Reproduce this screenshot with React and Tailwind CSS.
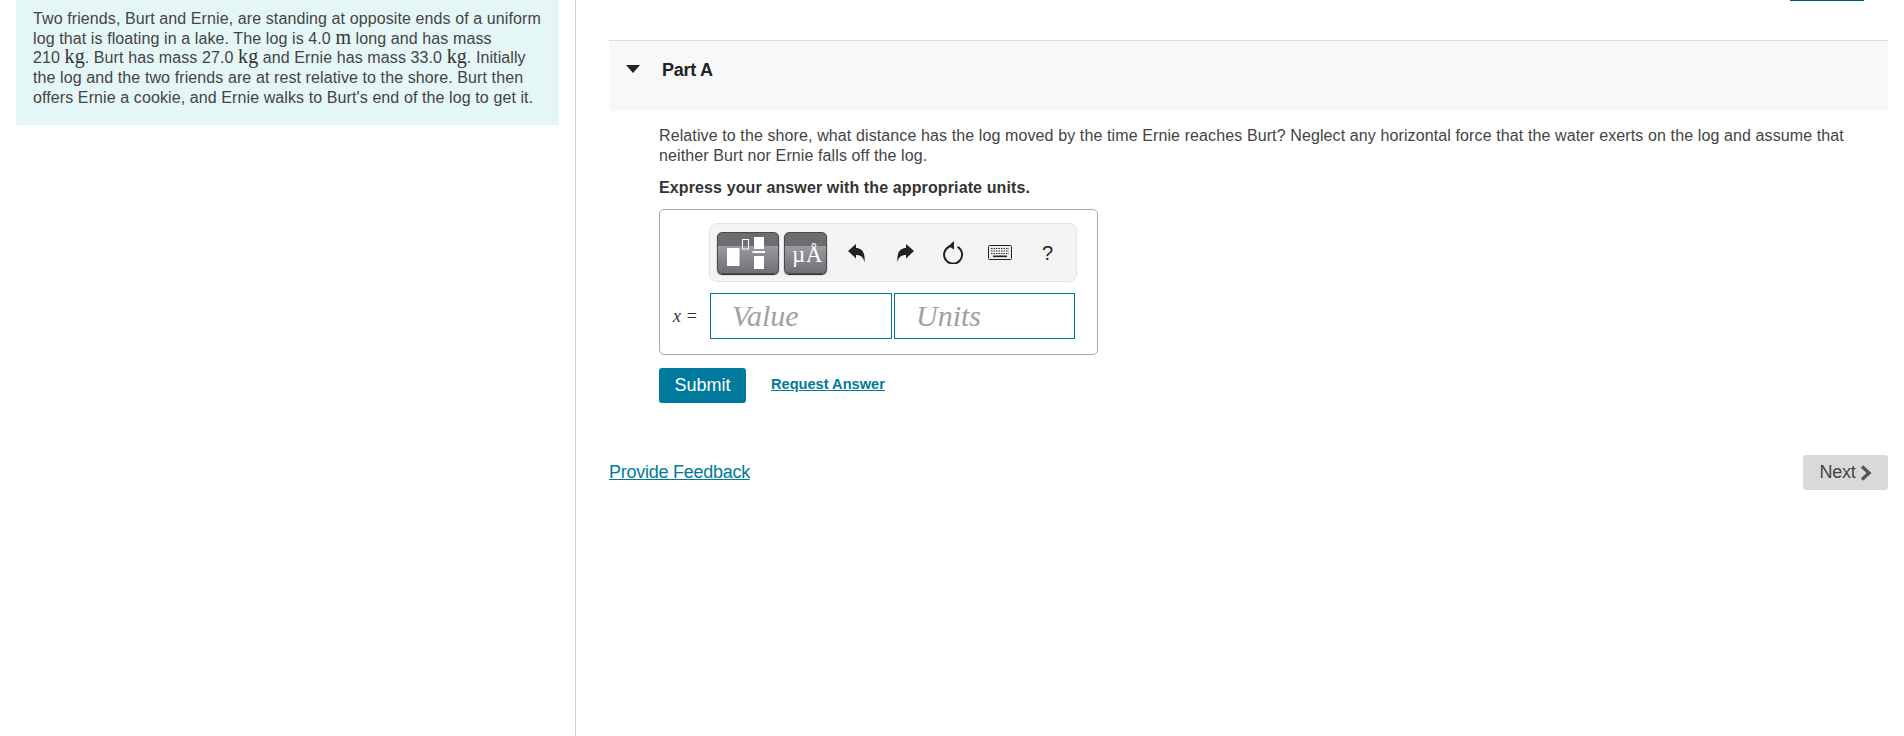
const sans = "font-['Liberation_Sans',Arial,sans-serif]";
const serif = "font-['Liberation_Serif','Times_New_Roman',serif]";

function Kg() {
  return <span className={`${serif} text-[20px] leading-[0] text-[#333]`}>kg</span>;
}

function TemplatesIcon() {
  return (
    <div className="relative h-[42px] w-[62px] overflow-hidden rounded-[5px] border border-[#4a4a4e] bg-[linear-gradient(#6d6d71_0,#6d6d71_33%,#9a9aa2_33%,#6f6f75_100%)] shadow-[0_1px_1px_#222]">
      <svg width="62" height="42" viewBox="0 0 62 42" className="absolute -left-px -top-px">
        <rect x="10" y="16" width="12.5" height="18" fill="#fff" />
        <rect x="25.5" y="7.5" width="6" height="9.5" fill="none" stroke="#fff" strokeWidth="1" />
        <rect x="37" y="5" width="10" height="12" fill="#fff" />
        <rect x="35.5" y="19" width="12.5" height="2" fill="#fff" />
        <rect x="37" y="24" width="10" height="13" fill="#fff" />
      </svg>
    </div>
  );
}

function UnitsIcon() {
  return (
    <div className={`relative h-[42px] w-[43px] overflow-hidden rounded-[5px] border border-[#4a4a4e] bg-[linear-gradient(#6d6d71_0,#6d6d71_33%,#9a9aa2_33%,#6f6f75_100%)] shadow-[0_1px_1px_#222] text-white ${serif}`}>
      <span className="absolute left-[7px] top-[10px] text-[23px] leading-[24px] tracking-[0.5px]">µÅ</span>
    </div>
  );
}

function Undo({ flip }) {
  return (
    <svg width="18" height="20" viewBox="0 0 18 20" className={flip ? "-scale-x-100" : ""}>
      <path d="M0 8 L8 1 V5 C13 5 17.5 8 16.5 19.5 C15.5 14 13 12 8 12 V15.5 Z" fill="#222" />
    </svg>
  );
}

function Reset() {
  return (
    <svg width="21" height="23" viewBox="0 0 21 23">
      <path d="M7 5.2 A9 9 0 1 0 14.5 5.8" fill="none" stroke="#222" strokeWidth="2" />
      <path d="M11 0 V8.5 L5.5 5 Z" fill="#222" />
    </svg>
  );
}

function Keyboard() {
  return (
    <svg width="24" height="15" viewBox="0 0 24 15">
      <rect x="0.5" y="0.5" width="23" height="14" rx="1" fill="#eee" stroke="#222" />
      <path d="M3 3.5H21M3 6H21M3 8.5H21" stroke="#333" strokeWidth="1.2" strokeDasharray="1.5 1" />
      <rect x="5" y="10.5" width="14" height="1.6" fill="#222" />
    </svg>
  );
}

export default function App() {
  return (
    <div className={`flex h-[736px] w-[1904px] overflow-hidden bg-white ${sans} text-[#333]`}>
      <div className="h-full w-[576px] shrink-0 border-r border-[#c7ced6] pl-4">
        <div className="h-[125px] w-[543px] bg-[#e5f6f7] pl-[17px] pr-2 pt-[9px] text-[16px] leading-[19.7px] tracking-[0.1px] text-[#444]">
          Two friends, Burt and Ernie, are standing at opposite ends of a uniform
          <br />
          log that is floating in a lake. The log is 4.0 <span className={`${serif} text-[20px] leading-[0] text-[#333]`}>m</span> long and has mass
          <br />
          210 <Kg />. Burt has mass 27.0 <Kg /> and Ernie has mass 33.0 <Kg />. Initially
          <br />
          the log and the two friends are at rest relative to the shore. Burt then
          <br />
          offers Ernie a cookie, and Ernie walks to Burt's end of the log to get it.
        </div>
      </div>

      <div className="relative h-full w-[1328px] pl-[33px] pr-4">
        <div className="absolute right-[40px] top-0 h-[1px] w-[74px] bg-[#005a70]" />
        <div className="mt-10 flex h-[71px] items-start border-t border-[#ddd] bg-[#f8f8f8] pl-[17px] pt-[19px]">
          <svg width="14" height="8" viewBox="0 0 14 8" className="mt-[5px]">
            <path d="M0 0H14L7 8Z" fill="#222" />
          </svg>
          <span className="ml-[22px] text-[18px] font-bold leading-[20px] tracking-[-0.25px] text-[#222]">Part A</span>
        </div>

        <div className="pl-[50px]">
          <p className="mt-[15px] text-[16px] leading-[20px] tracking-[0.11px] text-[#444]">
            Relative to the shore, what distance has the log moved by the time Ernie reaches Burt? Neglect any horizontal force that the water exerts on the log and assume that
            <br />
            neither Burt nor Ernie falls off the log.
          </p>
          <p className="mt-[12px] text-[16px] font-bold leading-[20px] tracking-[0.12px] text-[#333]">
            Express your answer with the appropriate units.
          </p>

          <div className="mt-[11px] h-[146px] w-[439px] rounded-[5px] border border-[#aaa] pl-[50px] pt-[13px]">
            <div className="-ml-px flex h-[59px] w-[368px] items-center rounded-[8px] border border-[#e3e3e3] bg-[#f4f4f4] pl-[7px]">
              <TemplatesIcon />
              <div className="ml-[5px]"><UnitsIcon /></div>
              <div className="ml-[21px] flex"><Undo /></div>
              <div className="ml-[30px] flex"><Undo flip /></div>
              <div className="ml-[29px] flex"><Reset /></div>
              <div className="ml-[24px] flex"><Keyboard /></div>
              <span className="ml-[30px] text-[20px] leading-[20px] text-[#222]">?</span>
            </div>
            <div className="relative mt-[11px] flex gap-[2px]">
              <span className={`absolute -left-[37px] top-[13px] text-[18px] leading-[20px] tracking-[0.6px] text-[#333] ${serif}`}>
                <i>x</i> =
              </span>
              <div className={`flex h-[46px] w-[182px] items-center border border-[#007a9c] pb-[2px] pl-[21px] text-[30px] italic text-[#a0a0a0] ${serif}`}>Value</div>
              <div className={`flex h-[46px] w-[181px] items-center border border-[#007a9c] pb-[2px] pl-[21px] text-[30px] italic text-[#a0a0a0] ${serif}`}>Units</div>
            </div>
          </div>

          <div className="mt-[13px] flex items-center">
            <button className="h-[35px] w-[87px] rounded-[3px] bg-[#007a9c] text-[18px] text-white">Submit</button>
            <a className="relative -top-px ml-[25px] text-[14.6px] font-bold text-[#007a9c] underline">Request Answer</a>
          </div>
        </div>

        <div className="mt-[52px] flex items-center justify-between">
          <a className="relative -top-px text-[18px] leading-[20px] tracking-[-0.26px] text-[#007a9c] underline">Provide Feedback</a>
          <div className="flex h-[35px] w-[85px] items-center justify-center gap-[4px] rounded-[3px] bg-[#d9d9d9] text-[18px] tracking-[-0.2px] text-[#444]">
            Next
            <svg width="12" height="16" viewBox="0 0 12 16">
              <path d="M2 1.5L9 8L2 14.5" fill="none" stroke="#555" strokeWidth="3.4" />
            </svg>
          </div>
        </div>
      </div>
    </div>
  );
}
